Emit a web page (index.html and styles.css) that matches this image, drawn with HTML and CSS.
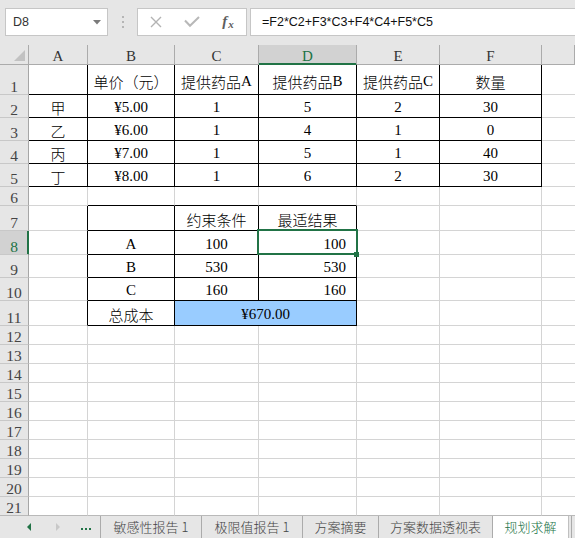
FILE: index.html
```html
<!DOCTYPE html>
<html lang="zh-CN">
<head>
<meta charset="utf-8">
<title>规划求解</title>
<link rel="stylesheet" href="styles.css">
</head>
<body>
<div class="toolbar">
  <div class="namebox"><span>D8</span><svg class="dd" width="8" height="5" viewBox="0 0 8 5"><polygon points="0,0 8,0 4,4.5" fill="#7a7a7a"/></svg></div>
  <div class="grip"><svg width="4" height="12" viewBox="0 0 4 12"><rect x="1" y="0" width="2" height="2" fill="#b5b5b5"/><rect x="1" y="5" width="2" height="2" fill="#b5b5b5"/><rect x="1" y="10" width="2" height="2" fill="#b5b5b5"/></svg></div>
  <div class="fbtns">
    <span class="fb"><svg width="12" height="12" viewBox="0 0 12 12"><path d="M1 1 L11 11 M11 1 L1 11" stroke="#b3b3b3" stroke-width="1.4" fill="none"/></svg></span>
    <span class="fb"><svg width="16" height="12" viewBox="0 0 16 12"><path d="M1 4.5 L6 9.8 L15 1" stroke="#b8b8b8" stroke-width="2" fill="none"/></svg></span>
    <span class="fb fx"><i>f</i><i class="x">x</i></span>
  </div>
  <div class="formula">=F2*C2+F3*C3+F4*C4+F5*C5</div>
</div>

<div class="sheet">
  <div class="corner"><svg width="28" height="19" viewBox="0 0 28 19"><polygon points="25,5 25,16 14,16" fill="#c2c2c2"/></svg></div>
  <div class="ch">A</div><div class="ch">B</div><div class="ch">C</div><div class="ch cur">D</div><div class="ch">E</div><div class="ch">F</div><div class="ch g"></div>

  <div class="rh">1</div>
  <div class="c t"></div><div class="c t"><span class="zh">单价（元）</span></div><div class="c t"><span class="zh">提供药品</span>A</div><div class="c t"><span class="zh">提供药品</span>B</div><div class="c t"><span class="zh">提供药品</span>C</div><div class="c t"><span class="zh">数量</span></div><div class="c g"></div>

  <div class="rh">2</div>
  <div class="c t"><span class="zh">甲</span></div><div class="c t">¥5.00</div><div class="c t">1</div><div class="c t">5</div><div class="c t">2</div><div class="c t">30</div><div class="c g"></div>

  <div class="rh">3</div>
  <div class="c t"><span class="zh">乙</span></div><div class="c t">¥6.00</div><div class="c t">1</div><div class="c t">4</div><div class="c t">1</div><div class="c t">0</div><div class="c g"></div>

  <div class="rh">4</div>
  <div class="c t"><span class="zh">丙</span></div><div class="c t">¥7.00</div><div class="c t">1</div><div class="c t">5</div><div class="c t">1</div><div class="c t">40</div><div class="c g"></div>

  <div class="rh">5</div>
  <div class="c t"><span class="zh">丁</span></div><div class="c t">¥8.00</div><div class="c t">1</div><div class="c t">6</div><div class="c t">2</div><div class="c t">30</div><div class="c g"></div>

  <div class="rh">6</div>
  <div class="c"></div><div class="c bb"></div><div class="c bb"></div><div class="c bb"></div><div class="c"></div><div class="c"></div><div class="c g"></div>

  <div class="rh">7</div>
  <div class="c br"></div><div class="c t"></div><div class="c t"><span class="zh">约束条件</span></div><div class="c t"><span class="zh">最适结果</span></div><div class="c"></div><div class="c"></div><div class="c g"></div>

  <div class="rh cur">8</div>
  <div class="c br"></div><div class="c t">A</div><div class="c t">100</div><div class="c t r d8">100<span class="selbox"></span><span class="handle"></span></div><div class="c"></div><div class="c"></div><div class="c g"></div>

  <div class="rh">9</div>
  <div class="c br"></div><div class="c t">B</div><div class="c t">530</div><div class="c t r">530</div><div class="c"></div><div class="c"></div><div class="c g"></div>

  <div class="rh">10</div>
  <div class="c br"></div><div class="c t">C</div><div class="c t">160</div><div class="c t r">160</div><div class="c"></div><div class="c"></div><div class="c g"></div>

  <div class="rh">11</div>
  <div class="c br"></div><div class="c t"><span class="zh">总成本</span></div><div class="c t fill">¥670.00</div><div class="c"></div><div class="c"></div><div class="c g"></div>

  <div class="rh">12</div><div class="c"></div><div class="c"></div><div class="c"></div><div class="c"></div><div class="c"></div><div class="c"></div><div class="c g"></div>
  <div class="rh">13</div><div class="c"></div><div class="c"></div><div class="c"></div><div class="c"></div><div class="c"></div><div class="c"></div><div class="c g"></div>
  <div class="rh">14</div><div class="c"></div><div class="c"></div><div class="c"></div><div class="c"></div><div class="c"></div><div class="c"></div><div class="c g"></div>
  <div class="rh">15</div><div class="c"></div><div class="c"></div><div class="c"></div><div class="c"></div><div class="c"></div><div class="c"></div><div class="c g"></div>
  <div class="rh">16</div><div class="c"></div><div class="c"></div><div class="c"></div><div class="c"></div><div class="c"></div><div class="c"></div><div class="c g"></div>
  <div class="rh">17</div><div class="c"></div><div class="c"></div><div class="c"></div><div class="c"></div><div class="c"></div><div class="c"></div><div class="c g"></div>
  <div class="rh">18</div><div class="c"></div><div class="c"></div><div class="c"></div><div class="c"></div><div class="c"></div><div class="c"></div><div class="c g"></div>
  <div class="rh">19</div><div class="c"></div><div class="c"></div><div class="c"></div><div class="c"></div><div class="c"></div><div class="c"></div><div class="c g"></div>
  <div class="rh">20</div><div class="c"></div><div class="c"></div><div class="c"></div><div class="c"></div><div class="c"></div><div class="c"></div><div class="c g"></div>
  <div class="rh last">21</div><div class="c last"></div><div class="c last"></div><div class="c last"></div><div class="c last"></div><div class="c last"></div><div class="c last"></div><div class="c g last"></div>
</div>

<div class="tabs">
  <div class="nav"><svg width="100" height="22" viewBox="0 0 100 22">
    <polygon points="27,11 31,7 31,15" fill="#217346"/>
    <polygon points="60,11 56,7 56,15" fill="#c8c8c8"/>
    <rect x="81" y="12" width="2" height="2" fill="#217346"/>
    <rect x="85" y="12" width="2" height="2" fill="#217346"/>
    <rect x="89" y="12" width="2" height="2" fill="#217346"/>
  </svg></div>
  <div class="tab w101">敏感性报告 1</div>
  <div class="tab w101">极限值报告 1</div>
  <div class="tab w76">方案摘要</div>
  <div class="tab w114">方案数据透视表</div>
  <div class="tab w76 active">规划求解</div>
  <div class="more"></div>
</div>
</body>
</html>
```
FILE: styles.css
```css
* { box-sizing: border-box; margin: 0; padding: 0; }
html, body { width: 575px; height: 538px; overflow: hidden; }
body { background: #fff; font-family: "Liberation Sans", "Noto Sans CJK SC", sans-serif; }

/* formula bar */
.toolbar { height: 45px; background: #e6e6e6; display: flex; align-items: flex-start; padding: 8px 0 0 5px; }
.namebox { width: 103px; height: 28px; background: #fff; border: 1px solid #c6c6c6; display: flex; align-items: center; justify-content: space-between; padding: 0 6px 0 7px; font-size: 12.5px; color: #333; }
.dd { margin-top: 1px; }
.grip { width: 29px; height: 28px; display: flex; align-items: center; justify-content: center; padding-left: 1px; }
.fbtns { width: 110px; height: 28px; background: #fff; border: 1px solid #c6c6c6; display: flex; align-items: center; margin-right: 3px; }
.fb { width: 36px; height: 26px; display: flex; align-items: center; justify-content: center; }
.fx { font-family: "Liberation Serif", serif; font-weight: bold; color: #5e5e5e; font-size: 15px; padding-bottom: 2px; }
.fx .x { font-size: 11px; margin-top: 5px; margin-left: 1px; }
.formula { flex: 1; height: 28px; background: #fff; border: 1px solid #c6c6c6; border-right: none; display: flex; align-items: center; padding-left: 11px; font-size: 12.5px; color: #111; }

/* grid */
.sheet { display: grid; grid-template-columns: 29px 59px 87px 84px 98px 83px 102px 33px; grid-template-rows: 20px 30px 23px 23px 23px 23px 19px 25px 24px 23px 23px 25px repeat(10, 19px); }
.corner { background: #e6e6e6; border-right: 1px solid #ababab; border-bottom: 1px solid #ababab; }
.corner svg { display: block; }
.ch { background: #e6e6e6; border-right: 1px solid #ababab; border-bottom: 1px solid #ababab; display: flex; align-items: flex-end; justify-content: center; font-family: "Liberation Serif", serif; font-size: 15px; line-height: 15px; color: #333; }
.ch.cur { background: #d2d2d2; color: #217346; border-bottom-color: #217346; box-shadow: inset 0 -1px 0 #217346; }
.rh { background: #e6e6e6; border-right: 1px solid #a6a6a6; border-bottom: 1px solid #c8c8c8; display: flex; align-items: flex-end; justify-content: center; font-family: "Liberation Serif", serif; font-size: 15.5px; line-height: 15px; color: #444; }
.rh.cur { background: #d2d2d2; color: #217346; border-right-color: #217346; box-shadow: inset -1px 0 0 #217346; }

.c { border-right: 1px solid #d4d4d4; border-bottom: 1px solid #d4d4d4; display: flex; align-items: center; justify-content: center; padding-top: 3px; font-family: "Liberation Serif", "Noto Sans CJK SC", serif; font-size: 15px; line-height: 17px; color: #000; white-space: nowrap; }
.zh { font-family: "Noto Sans CJK SC", sans-serif; font-weight: 300; }
.c.g { border-right: none; }
.c.t { border-right-color: #000; border-bottom-color: #000; }
.c.br { border-right-color: #000; }
.c.bb { border-bottom-color: #000; }
.c.r { justify-content: flex-end; padding-right: 10px; }
.c.fill { grid-column: span 2; background: #99ccff; }
.last { border-bottom-color: #b9b9b9 !important; }

.d8 { position: relative; }
.selbox { position: absolute; left: -2px; top: -2px; width: 101px; height: 26px; border: 2px solid #217346; }
.handle { position: absolute; left: 95px; top: 21px; width: 5px; height: 5px; background: #217346; }

/* sheet tabs */
.tabs { height: 22px; background: #e6e6e6; display: flex; font-family: "Noto Sans CJK SC", sans-serif; font-weight: 300; font-size: 13px; color: #444; }
.nav { width: 101px; border-right: 1px solid #ababab; }
.nav svg { display: block; }
.tab { border-right: 1px solid #ababab; display: flex; align-items: center; justify-content: center; line-height: 18px; white-space: nowrap; }
.w101 { width: 101px; }
.w76 { width: 76px; }
.w114 { width: 114px; }
.tab.active { background: #fff; color: #217346; border-right-color: #c0c0c0; }
.more { flex: 1; margin-left: 2px; border-left: 1px solid #ababab; }
```
